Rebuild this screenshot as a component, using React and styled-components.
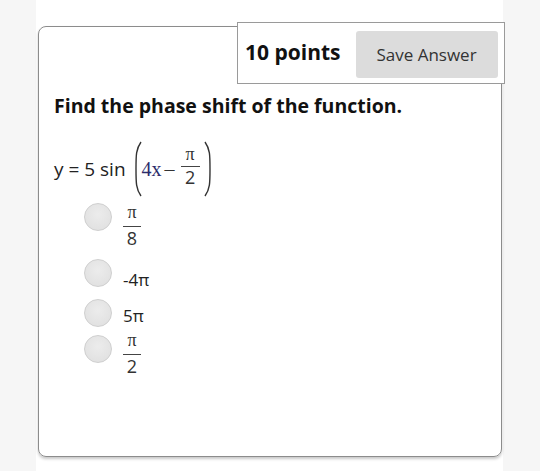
import React from 'react'
import styled, { createGlobalStyle } from 'styled-components'

const GlobalStyle = createGlobalStyle`
  html, body {
    margin: 0;
    padding: 0;
    background: #f6f6f6;
    font-family: "Open Sans", "Liberation Sans", sans-serif;
  }
`

const Column = styled.div`
  margin-left: 36px;
  width: 467px;
  height: 471px;
  background: #ffffff;
  padding-top: 26px;
  box-sizing: border-box;
`

const Card = styled.div`
  position: relative;
  margin-left: 2px;
  width: 464px;
  height: 431px;
  box-sizing: border-box;
  border: 1px solid #8c8c8c;
  border-radius: 8px;
  box-shadow: 0 2px 3px rgba(0, 0, 0, 0.22);
  padding: 65px 0 0 15px;
`

const PointsBox = styled.div`
  position: absolute;
  top: -5px;
  right: -4px;
  width: 268px;
  height: 62px;
  box-sizing: border-box;
  border: 1px solid #9a9a9a;
  background: #fff;
  display: flex;
  align-items: center;
  padding: 0 7px 0 7px;
  gap: 15px;
`

const Points = styled.span`
  flex: none;
  white-space: nowrap;
  font-size: 21px;
  font-weight: 700;
  color: #111;
  margin-top: -3px;
`

const SaveButton = styled.button`
  flex: none;
  width: 142px;
  height: 47px;
  border: none;
  border-radius: 3px;
  background: #dcdcdc;
  color: #333;
  font-family: "Open Sans", "Liberation Sans", sans-serif;
  font-size: 17px;
  margin-top: 2px;
  white-space: nowrap;
`

const Title = styled.h2`
  margin: 0;
  font-size: 19.5px;
  font-weight: 700;
  color: #111;
  line-height: 28px;
`

const EquationRow = styled.div`
  display: flex;
  align-items: center;
  margin-top: 21px;
  font-size: 19px;
  color: #222;
`

const Formula = styled.span`
  display: inline-flex;
  align-items: center;
  margin-left: 8px;
  font-family: "Liberation Serif", serif;
  font-size: 20px;
  color: #333;
`

const Var = styled.span`
  color: #2c2c6c;
  margin: 0 2px 0 0;
`

const Minus = styled.span`
  margin: 0 6px 0 1px;
`

const Frac = styled.span`
  display: inline-flex;
  flex-direction: column;
  align-items: center;
  margin-top: ${p => p.mt || 0}px;
  margin-right: ${p => p.mr || 0}px;
  color: #333;
`

const Num = styled.span`
  font-family: "Liberation Serif", serif;
  font-size: 18px;
  line-height: 14px;
`

const Bar = styled.span`
  width: ${p => p.w || 18}px;
  height: 1px;
  background: #444;
  margin: ${p => (p.tight ? '5px 0 1px' : '7px 0 2px')};
`

const Denom = styled.span`
  font-family: "Open Sans", "Liberation Sans", sans-serif;
  font-size: 18px;
  line-height: 18px;
`

const Options = styled.div`
  display: flex;
  flex-direction: column;
  margin-top: 6px;
  padding-left: 30px;
`

const Option = styled.label`
  display: flex;
  align-items: flex-start;
  height: ${p => p.h}px;
  gap: 11px;
  font-size: 17px;
  line-height: 24px;
  color: #222;
`

const Text = styled.span`
  margin-top: ${p => p.mt || 0}px;
`

const Radio = styled.span`
  flex: none;
  width: 28px;
  height: 28px;
  border-radius: 50%;
  box-sizing: border-box;
  border: 1px solid #cfcfcf;
  background: radial-gradient(circle at 50% 40%, #ececec, #dedede);
`

const Paren = ({ right }) => (
  <svg width="8" height="56" viewBox="0 0 8 56" style={{ transform: right ? 'scaleX(-1)' : 'none' }}>
    <path d="M7 1 C2 8 2 14 2 28 C2 42 2 48 7 55" stroke="#333" strokeWidth="1.4" fill="none" />
  </svg>
)

const Fraction = ({ num, den, mt, mr, w, tight }) => (
  <Frac mt={mt} mr={mr}>
    <Num>{num}</Num>
    <Bar w={w} tight={tight} />
    <Denom>{den}</Denom>
  </Frac>
)

export default function App() {
  return (
    <>
      <GlobalStyle />
      <Column>
        <Card>
          <PointsBox>
            <Points>10 points</Points>
            <SaveButton>Save Answer</SaveButton>
          </PointsBox>
          <Title>Find the phase shift of the function.</Title>
          <EquationRow>
            <span>y = 5 sin</span>
            <Formula>
              <Paren />
              <Var>4x</Var>
              <Minus>–</Minus>
              <Fraction num="π" den="2" w={19} mt={-6} mr={4} tight />
              <Paren right />
            </Formula>
          </EquationRow>
          <Options>
            <Option h={56}>
              <Radio />
              <Fraction num="π" den="8" mt={2} />
            </Option>
            <Option h={40}>
              <Radio />
              <Text mt={9}>-4π</Text>
            </Option>
            <Option h={36}>
              <Radio />
              <Text mt={5}>5π</Text>
            </Option>
            <Option h={44}>
              <Radio />
              <Fraction num="π" den="2" mt={-2} />
            </Option>
          </Options>
        </Card>
      </Column>
    </>
  )
}
